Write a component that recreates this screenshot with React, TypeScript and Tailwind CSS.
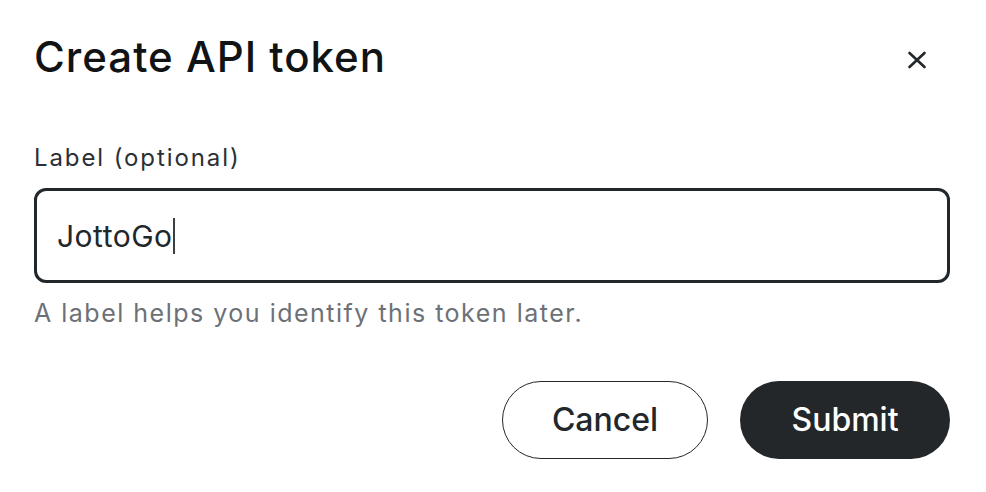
import React from "react";

export default function App() {
  return (
    <div
      className="w-[986px] h-[492px] bg-white text-[#22272b] pl-[34px] pr-[36px] pt-[26px]"
      style={{ fontFamily: "Inter, 'Noto Sans', sans-serif" }}
    >
      <div className="flex items-center justify-between h-[62px]">
        <h1 className="text-[42px] font-medium tracking-[1px] text-[#111315] leading-none">Create API token</h1>
        <button className="w-[40px] h-[40px] flex items-center justify-center mr-[13px] mt-[6px]">
          <svg width="20" height="20" viewBox="0 0 20 20" fill="none" stroke="#22272b" strokeWidth="2.6" strokeLinecap="round">
            <path d="M2.5 3 L17.5 17 M17.5 3 L2.5 17" />
          </svg>
        </button>
      </div>
      <label className="block mt-[55px] text-[24px] leading-[30px] tracking-[1.9px] text-[#2b3035]">Label (optional)</label>
      <div className="mt-[15px] h-[95px] rounded-[12px] border-[3px] border-[#22272b] flex items-center pl-[20px]">
        <span className="text-[30px] tracking-[0.5px] text-[#22272b] mt-[1px]">JottoGo</span>
        <span className="w-[2.5px] h-[36px] bg-[#3a3f44]" />
      </div>
      <p className="mt-[14px] text-[25px] leading-[32px] tracking-[1.5px] text-[#6c7177]">A label helps you identify this token later.</p>
      <div className="mt-[52px] flex justify-end gap-[32px]">
        <button className="w-[206px] h-[78px] rounded-full border-[1.5px] border-[#22272b] text-[32px] font-medium text-[#22272b]">
          Cancel
        </button>
        <button className="w-[210px] h-[78px] rounded-full bg-[#23272a] text-[32px] font-medium text-white">
          Submit
        </button>
      </div>
    </div>
  );
}
